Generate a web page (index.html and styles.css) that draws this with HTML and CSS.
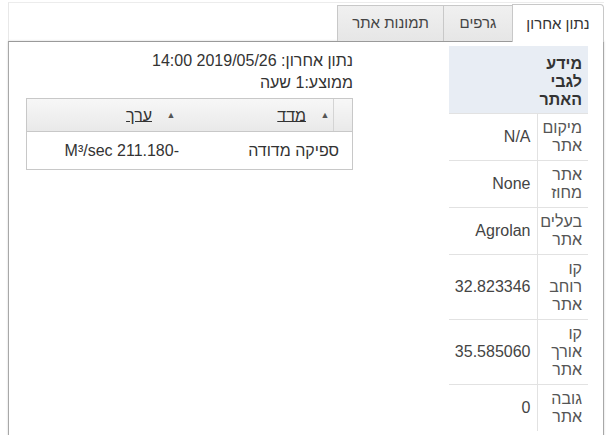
FILE: index.html
```html
<!DOCTYPE html>
<html lang="he" dir="rtl">
<head>
<meta charset="utf-8">
<link rel="stylesheet" href="styles.css">
</head>
<body>
<div class="widget">
  <ul class="tabs">
    <li class="tab tab-active tab-w1">נתון אחרון</li>
    <li class="tab tab-w2">גרפים</li>
    <li class="tab tab-w3">תמונות אתר</li>
  </ul>
  <div class="panel">
    <table class="info">
      <colgroup><col class="col-lbl"><col class="col-val"></colgroup>
      <tr><th colspan="2" class="info-head"><div class="info-title">מידע לגבי האתר</div></th></tr>
      <tr><td class="lbl">מיקום אתר</td><td class="val">N/A</td></tr>
      <tr><td class="lbl">אתר מחוז</td><td class="val">None</td></tr>
      <tr><td class="lbl">בעלים אתר</td><td class="val">Agrolan</td></tr>
      <tr><td class="lbl">קו רוחב אתר</td><td class="val">32.823346</td></tr>
      <tr><td class="lbl">קו אורך אתר</td><td class="val">35.585060</td></tr>
      <tr><td class="lbl">גובה אתר</td><td class="val">0</td></tr>
    </table>
    <div class="latest">
      <div class="line">נתון אחרון: 2019/05/26 14:00</div>
      <div class="line">ממוצע:1 שעה</div>
      <div class="grid">
        <table class="data data-head">
          <tr>
            <th class="c-gap"></th>
            <th class="c-name"><span class="sort">▲</span><span class="hd">מדד</span></th>
            <th class="c-val"><span class="sort">▲</span><span class="hd">ערך</span></th>
          </tr>
        </table>
        <table class="data data-body">
          <tr>
            <td class="d-name">ספיקה מדודה</td>
            <td class="d-val">-211.180 M³/sec</td>
          </tr>
        </table>
      </div>
    </div>
  </div>
</div>
</body>
</html>
```
FILE: styles.css
```css
html, body {
  margin: 0;
  padding: 0;
  background: #fff;
}
body {
  font-family: Arial, "Liberation Sans", sans-serif;
  font-size: 16px;
  color: #333;
  overflow: hidden;
}
.widget {
  margin: 2px 6px 0 8px;
  width: 596px;
  box-sizing: border-box;
}
.tabs {
  list-style: none;
  margin: 0;
  padding: 0;
  height: 38px;
  border-top: 1px solid #ececec;
  border-left: 1px solid #e8e8e8;
  display: flex;
  align-items: flex-end;
  position: relative;
  z-index: 2;
}
.tab {
  box-sizing: border-box;
  height: 36px;
  line-height: 34px;
  text-align: center;
  background: linear-gradient(#f0f0f0, #e6e6e6);
  border: 1px solid #c8c8c8;
  border-bottom: 0;
  color: #444;
  font-size: 15px;
  margin-left: -1px;
}
.tab-active {
  height: 38px;
  line-height: 38px;
  background: #fff;
  margin-bottom: -1px;
  border-radius: 0 4px 0 0;
  color: #333;
}
.tab-w1 { width: 92px; }
.tab-w2 { width: 70px; }
.tab-w3 { width: 107px; }
.panel {
  border-top: 1px solid #9a9a9a;
  border-left: 1px solid #a8a8a8;
  border-right: 1px solid #a8a8a8;
  box-shadow: 0 0 2px rgba(0,0,0,0.18);
  height: 400px;
  padding: 4px 15px 0 16px;
  display: flex;
  gap: 96px;
  align-items: flex-start;
}
.info {
  width: 139px;
  flex: none;
  border-collapse: collapse;
  table-layout: fixed;
  font-size: 16px;
  line-height: 18px;
}
.col-lbl { width: 51px; }
.col-val { width: 88px; }
.info-head {
  background: #e8edf4;
  text-align: right;
  font-weight: bold;
  color: #333;
  padding: 9px 6px 4px 6px;
  vertical-align: bottom;
}
.info-title {
  width: 50px;
}
.info td {
  border-top: 1px solid #e2e2e2;
  padding: 5px 6px 5px 4px;
  vertical-align: middle;
}
.lbl {
  color: #555;
  border-left: 1px solid #e2e2e2;
}
.val {
  color: #444;
  text-align: right;
}
.latest {
  width: 327px;
  flex: none;
  padding-top: 4px;
}
.line {
  line-height: 22px;
  height: 22px;
  text-align: right;
}
.grid {
  margin-top: 4px;
  width: 327px;
  border: 1px solid #c8c8c8;
  box-sizing: border-box;
}
.data {
  width: 100%;
  border-collapse: collapse;
  table-layout: fixed;
}
.data-head th {
  height: 32px;
  padding: 0;
  background: linear-gradient(#f7f7f7, #e9e9e9);
  border-bottom: 1px solid #c8c8c8;
  font-weight: normal;
  text-align: right;
  white-space: nowrap;
}
.c-gap {
  width: 18px;
  border-left: 1px solid #d4d4d4;
}
.c-name { width: 154px; }
.sort {
  display: inline-block;
  width: 10px;
  margin-right: 3px;
  margin-left: 14px;
  font-size: 9px;
  color: #555;
  text-align: center;
  vertical-align: middle;
}
.hd {
  text-decoration: underline;
  vertical-align: middle;
}
.data-body td {
  height: 37px;
  padding: 0 13px;
  text-align: right;
  white-space: nowrap;
}
.d-name {
  width: 134px;
  padding-right: 11px;
}
```
